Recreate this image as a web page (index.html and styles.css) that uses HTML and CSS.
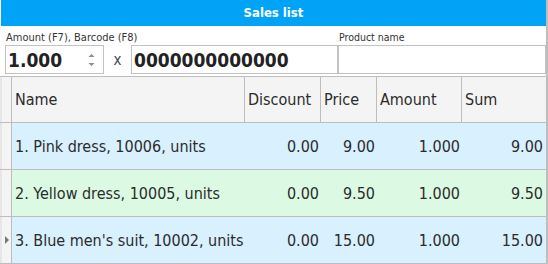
FILE: index.html
```html
<!DOCTYPE html>
<html>
<head>
<meta charset="utf-8">
<link rel="stylesheet" href="styles.css">
</head>
<body>
<div class="window">
  <div class="title">Sales list</div>
  <div class="form">
    <div class="field-group left">
      <div class="label">Amount (F7), Barcode (F8)</div>
      <div class="inputs">
        <div class="box amount">
          <span class="val">1.000</span>
          <span class="spin">
            <svg width="7" height="16" viewBox="0 0 7 16"><path d="M3.5 2 L6.5 5 L0.5 5 Z" fill="#8a8a8a"/><path d="M0.5 11 L6.5 11 L3.5 14 Z" fill="#8a8a8a"/></svg>
          </span>
        </div>
        <span class="times">x</span>
        <div class="box barcode"><span class="val">0000000000000</span></div>
      </div>
    </div>
    <div class="field-group right">
      <div class="label small">Product name</div>
      <div class="box product"></div>
    </div>
  </div>
  <div class="table">
    <div class="row head">
      <div class="ind"></div>
      <div class="c">Name</div>
      <div class="c">Discount</div>
      <div class="c">Price</div>
      <div class="c">Amount</div>
      <div class="c last">Sum</div>
    </div>
    <div class="row blue">
      <div class="ind"></div>
      <div class="c">1. Pink dress, 10006, units</div>
      <div class="c num">0.00</div>
      <div class="c num">9.00</div>
      <div class="c num">1.000</div>
      <div class="c num last">9.00</div>
    </div>
    <div class="row green">
      <div class="ind"></div>
      <div class="c">2. Yellow dress, 10005, units</div>
      <div class="c num">0.00</div>
      <div class="c num">9.50</div>
      <div class="c num">1.000</div>
      <div class="c num last">9.50</div>
    </div>
    <div class="row blue">
      <div class="ind"><svg width="4" height="8" viewBox="0 0 4 8"><path d="M0 0 L4 4 L0 8 Z" fill="#777"/></svg></div>
      <div class="c">3. Blue men's suit, 10002, units</div>
      <div class="c num">0.00</div>
      <div class="c num">15.00</div>
      <div class="c num">1.000</div>
      <div class="c num last">15.00</div>
    </div>
  </div>
</div>
</body>
</html>
```
FILE: styles.css
```css
* { box-sizing: border-box; }
html, body { margin: 0; padding: 0; background: #fff; }
body {
  font-family: "DejaVu Sans", Tahoma, sans-serif;
  font-stretch: condensed;
  color: #2b2b2b;
}
.window {
  width: 548px;
  height: 264px;
  border-right: 2px solid #bdbdbd;
  padding-left: 1px;
  overflow: hidden;
}
.title {
  height: 26px;
  background: #00a3f5;
  color: #fff;
  font-weight: bold;
  font-size: 13px;
  text-align: center;
  line-height: 26px;
}
.form {
  display: flex;
  padding: 4px 0 0 4px;
  height: 50px;
}
.field-group.left { width: 334px; }
.field-group.right { width: 208px; margin-left: 0; }
.label {
  font-size: 11px;
  height: 15px;
  line-height: 15px;
  padding-left: 1px;
  color: #333;
}
.label.small { font-size: 10.5px; padding-left: 1px; }
.inputs { display: flex; align-items: center; }
.box {
  height: 29px;
  border: 1px solid #c2c2c2;
  background: #fff;
  display: flex;
  align-items: center;
}
.amount { width: 99px; padding-left: 2px; justify-content: space-between; padding-right: 8px; }
.barcode { width: 207px; padding-left: 2px; }
.product { width: 208px; }
.val {
  font-weight: bold;
  font-size: 19px;
  color: #222;
}
.spin { display: flex; align-items: center; }
.times {
  width: 27px;
  text-align: center;
  font-size: 15px;
  color: #444a55;
}
.table {
  margin-top: 0;
  margin-left: -1px;
  border-top: 1px solid #bdbdbd;
}
.row {
  display: grid;
  grid-template-columns: 12px 233px 76px 56px 85px 84px;
  height: 47px;
  border-bottom: 1px solid #bdbdbd;
  font-size: 16px;
}
.row.head { height: 46px; background: #f4f4f4; }
.row.blue { background: #d9f0ff; }
.row.green { background: #dcfae3; }
.ind {
  background: #f4f4f4;
  border-right: 1px solid #bdbdbd;
  border-left: 2px solid #e6e6e6;
  display: flex;
  align-items: center;
  justify-content: center;
}
.c {
  display: flex;
  align-items: center;
  padding: 0 3px;
  white-space: nowrap;
}
.head .c { border-right: 1px solid #bdbdbd; padding-left: 3px; }
.head .c.last { border-right: none; }
.num { justify-content: flex-end; padding-right: 2px; }
.num.last { padding-right: 3px; }
```
